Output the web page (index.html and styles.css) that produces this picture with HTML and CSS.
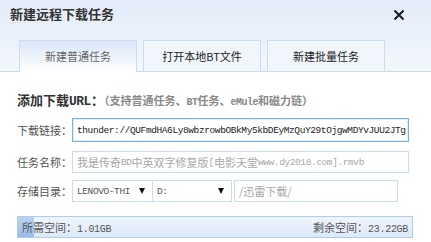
FILE: index.html
```html
<!DOCTYPE html>
<html lang="zh-CN">
<head>
<meta charset="utf-8">
<title>新建远程下载任务</title>
<link rel="stylesheet" href="styles.css">
</head>
<body>
<div class="dialog">
  <header class="head">
    <div class="titlebar">
      <span class="title">新建远程下载任务</span>
      <span class="close"><svg width="12" height="12" viewBox="0 0 12 12"><path d="M1.5 1.5L10.5 10.5M10.5 1.5L1.5 10.5" stroke="#1a1a1a" stroke-width="2" fill="none"/></svg></span>
    </div>
    <nav class="tabs">
      <div class="tab active">新建普通任务</div>
      <div class="tab">打开本地BT文件</div>
      <div class="tab">新建批量任务</div>
    </nav>
  </header>
  <main class="content">
    <h2 class="heading">添加下载<span class="lat">URL</span>：<span class="sub">（支持普通任务、<span class="lat">BT</span>任务、<span class="lat">eMule</span>和磁力链）</span></h2>
    <div class="row r1">
      <span class="label">下载链接：</span>
      <div class="field wide focus">thunder://QUFmdHA6Ly8wbzrowbOBkMy5kbDEyMzQuY29tOjgwMDYvJUU2JTg</div>
    </div>
    <div class="row r2">
      <span class="label">任务名称：</span>
      <div class="field wide ph cjk">我是传奇<span class="m">BD</span>中英双字修复版<span class="m">[</span>电影天堂<span class="m">www.dy2018.com].rmvb</span></div>
    </div>
    <div class="row r3">
      <span class="label">存储目录：</span>
      <div class="field sel s1"><span>LENOVO-THI</span><i class="arrow"></i></div>
      <div class="field sel s2"><span>D:</span><i class="arrow"></i></div>
      <div class="field path ph">/迅雷下载/</div>
    </div>
    <div class="bar">
      <div class="fill" style="width:16px"></div>
      <span class="btxt">所需空间：<span class="num">1.01GB</span></span>
      <span class="btxt">剩余空间：<span class="num">23.22GB</span></span>
    </div>
  </main>
</div>
</body>
</html>
```
FILE: styles.css
```css
html, body {
  margin: 0;
  padding: 0;
}
body {
  width: 431px;
  height: 242px;
  overflow: hidden;
  background: #ffffff;
  font-family: "Noto Sans CJK SC", "Noto Sans", sans-serif;
  color: #333;
}
.dialog {
  width: 431px;
  height: 242px;
}
.head {
  box-sizing: border-box;
  height: 72px;
  background: linear-gradient(#e3ecf8, #f3f7fd);
  border-bottom: 1px solid #c8dbf2;
}
.titlebar {
  box-sizing: border-box;
  height: 40px;
  display: flex;
  justify-content: space-between;
  align-items: flex-start;
  padding: 5px 26px 0 10px;
}
.title {
  font-size: 13px;
  font-weight: bold;
  line-height: 18px;
  color: #333;
}
.close {
  display: block;
  margin-top: 4px;
  width: 12px;
  height: 12px;
}
.close svg {
  display: block;
}
.tabs {
  display: flex;
  gap: 6px;
  padding-left: 19px;
  height: 31px;
}
.tab {
  box-sizing: border-box;
  width: 118px;
  height: 32px;
  border: 1px solid #c8dcf3;
  background: #f1f6fd;
  font-size: 11px;
  line-height: 30px;
  text-align: center;
  color: #222;
}
.tab.active {
  border-bottom: none;
  background: linear-gradient(#d9e7f8, #ffffff);
  color: #666;
}
.content {
  padding: 0 18px 0 17px;
}
.heading {
  margin: 20px 0 0;
  font-size: 13px;
  line-height: 16px;
  height: 16px;
  font-weight: bold;
  color: #333;
  white-space: nowrap;
}
.lat {
  font-family: "Liberation Mono", monospace;
  letter-spacing: -0.5px;
}
.sub {
  font-size: 11px;
  color: #888;
}
.sub .lat {
  font-size: 10px;
}
.row {
  display: flex;
  align-items: stretch;
}
.r1 { margin-top: 10px; height: 24px; }
.r2 { margin-top: 9px; height: 22px; }
.r3 { margin-top: 7px; height: 22px; }
.label {
  width: 55px;
  flex: none;
  font-size: 11px;
  color: #555;
  display: flex;
  align-items: center;
}
.field {
  box-sizing: border-box;
  height: 100%;
  border: 1px solid #c9dcf2;
  padding: 0 4px;
  font-family: "Liberation Mono", "Noto Sans CJK SC", monospace;
  font-size: 9.5px;
  letter-spacing: -0.4px;
  color: #222;
  white-space: nowrap;
  overflow: hidden;
  display: flex;
  align-items: center;
  background: #fff;
}
.field.cjk {
  font-family: "Noto Sans CJK SC", sans-serif;
  font-size: 11px;
  letter-spacing: 0;
}
.field .m {
  font-family: "Liberation Mono", monospace;
  font-size: 9.5px;
  letter-spacing: -0.4px;
}
.wide { width: 337px; }
.focus {
  border-color: #7aaee6;
  box-shadow: inset 0 0 0 1px #e2eefb;
}
.ph { color: #a8a8a8; }
.sel {
  justify-content: space-between;
  color: #555;
  padding-right: 7px;
}
.s1 { width: 81px; }
.s2 { width: 79px; border-left: none; }
.arrow {
  width: 0;
  height: 0;
  border-left: 3.5px solid transparent;
  border-right: 3.5px solid transparent;
  border-top: 6px solid #111;
}
.path {
  width: 164px;
  margin-left: 2px;
  font-family: "Noto Sans CJK SC", sans-serif;
  font-size: 11px;
  letter-spacing: 0;
}
.bar {
  position: relative;
  box-sizing: border-box;
  margin-top: 14px;
  width: 396px;
  height: 22px;
  border: 1px solid #b2cced;
  background: linear-gradient(#eef4fc, #dde9f8);
  display: flex;
  justify-content: space-between;
  align-items: center;
  padding: 0 4px;
}
.fill {
  position: absolute;
  left: 0;
  top: 0;
  bottom: 0;
  background: linear-gradient(#b9d3f1, #98bce8);
}
.btxt {
  position: relative;
  font-size: 11px;
  color: #555;
}
.num {
  font-family: "Liberation Mono", monospace;
  font-size: 10px;
  letter-spacing: -0.3px;
}
```
